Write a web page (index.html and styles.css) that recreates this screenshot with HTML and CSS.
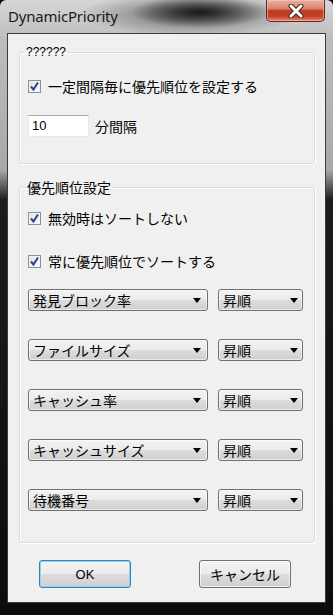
FILE: index.html
```html
<!DOCTYPE html>
<html lang="ja">
<head>
  <meta charset="UTF-8" />
  <title>DynamicPriority</title>
  <link rel="stylesheet" href="styles.css">
</head>
<body>
  <div class="window">
    <!-- タイトルバー -->
    <div class="titlebar">
      <div class="title">DynamicPriority</div>
      <div class="close">
        <svg width="18" height="14" viewBox="0 0 18 14">
          <path d="M4 2 L14 12 M14 2 L4 12" stroke="#4a2018" stroke-width="5" stroke-linecap="round" fill="none"/>
          <path d="M4 2 L14 12 M14 2 L4 12" stroke="#ffffff" stroke-width="3" stroke-linecap="round" fill="none"/>
        </svg>
      </div>
    </div>

    <div class="client">
      <fieldset class="group group-interval">
        <legend class="legend-small">??????</legend>
        <label class="check">
          <span class="box"><svg width="11" height="11" viewBox="0 0 11 11"><path d="M2 5.5 L4.5 8.5 L9 1.5" stroke="#2b4490" stroke-width="2" fill="none"/></svg></span>
          一定間隔毎に優先順位を設定する
        </label>
        <div class="interval-row">
          <div class="textbox">10</div>
          <span>分間隔</span>
        </div>
      </fieldset>

      <fieldset class="group group-sort">
        <legend>優先順位設定</legend>
        <label class="check">
          <span class="box"><svg width="11" height="11" viewBox="0 0 11 11"><path d="M2 5.5 L4.5 8.5 L9 1.5" stroke="#2b4490" stroke-width="2" fill="none"/></svg></span>
          無効時はソートしない
        </label>
        <label class="check check-second">
          <span class="box"><svg width="11" height="11" viewBox="0 0 11 11"><path d="M2 5.5 L4.5 8.5 L9 1.5" stroke="#2b4490" stroke-width="2" fill="none"/></svg></span>
          常に優先順位でソートする
        </label>

        <div class="sort-list">
          <div class="sort-row">
            <div class="combo combo-key"><span>発見ブロック率</span><i class="arrow"></i></div>
            <div class="combo combo-order"><span>昇順</span><i class="arrow"></i></div>
          </div>
          <div class="sort-row">
            <div class="combo combo-key"><span>ファイルサイズ</span><i class="arrow"></i></div>
            <div class="combo combo-order"><span>昇順</span><i class="arrow"></i></div>
          </div>
          <div class="sort-row">
            <div class="combo combo-key"><span>キャッシュ率</span><i class="arrow"></i></div>
            <div class="combo combo-order"><span>昇順</span><i class="arrow"></i></div>
          </div>
          <div class="sort-row">
            <div class="combo combo-key"><span>キャッシュサイズ</span><i class="arrow"></i></div>
            <div class="combo combo-order"><span>昇順</span><i class="arrow"></i></div>
          </div>
          <div class="sort-row">
            <div class="combo combo-key"><span>待機番号</span><i class="arrow"></i></div>
            <div class="combo combo-order"><span>昇順</span><i class="arrow"></i></div>
          </div>
        </div>
      </fieldset>

      <div class="buttons">
        <div class="btn btn-default">OK</div>
        <div class="btn">キャンセル</div>
      </div>
    </div>
  </div>
</body>
</html>
```

FILE: styles.css
```css
html, body {
  margin: 0;
  padding: 0;
  background: #000;
}

.window {
  width: 333px;
  height: 615px;
  box-sizing: border-box;
  display: flex;
  flex-direction: column;
  border-radius: 6px 6px 0 0;
  background:
    radial-gradient(ellipse 70px 16px at 200px 12px, rgba(20, 20, 20, 0.95), rgba(40, 40, 40, 0) 100%),
    radial-gradient(ellipse 110px 22px at 190px 14px, rgba(60, 60, 60, 0.7), rgba(60, 60, 60, 0) 100%),
    linear-gradient(to bottom, #d6d6d6 0, #bdbdbd 40px, #a8a8a8 170px, #1c1c1c 200px, #0c0c0c 100%);
  font-family: "Noto Sans CJK JP", "Noto Sans", sans-serif;
  color: #000;
}

/* タイトルバー */
.titlebar {
  height: 33px;
  display: flex;
  justify-content: space-between;
  align-items: flex-start;
  padding: 0 8px 0 8px;
  flex-shrink: 0;
}

.title {
  font-family: "Noto Sans", "Open Sans", sans-serif;
  font-size: 15px;
  line-height: 32px;
  color: #1a1a1a;
  letter-spacing: -0.2px;
}

.close {
  width: 59px;
  height: 22px;
  box-sizing: border-box;
  border: 1px solid #5b2b22;
  border-top: none;
  border-radius: 0 0 5px 5px;
  background: linear-gradient(to bottom, #e9b0a2 0, #d98572 40%, #c2391f 52%, #c5402a 78%, #e58a6f 100%);
  display: flex;
  align-items: center;
  justify-content: center;
  box-shadow: inset 0 0 0 1px rgba(255, 210, 200, 0.5);
}

.client {
  flex: 1;
  margin: 0 7px 12px 7px;
  border: 1px solid #3b3b3b;
  background: #f0f0f0;
  padding: 11px 10px 0 11px;
}

/* グループボックス */
.group {
  margin: 0;
  min-width: 0;
  border: 1px solid #d5dfe5;
  border-radius: 3px;
  box-shadow: inset 1px 1px 0 #fff, 1px 1px 0 #fff;
  padding: 17px 0 26px 8px;
}

.group legend {
  padding: 0 1px;
  margin-left: -2px;
  font-size: 14px;
  line-height: 18px;
}

.group legend.legend-small {
  font-family: "Liberation Sans", sans-serif;
  font-size: 12px;
  line-height: 14px;
  margin-left: -3px;
}

.group-sort {
  margin-top: 14px;
  padding: 12px 0 31px 8px;
}

.check {
  display: flex;
  align-items: center;
  height: 20px;
  font-size: 14px;
  gap: 7px;
}

.check-second {
  margin-top: 23px;
}

.box {
  width: 13px;
  height: 13px;
  box-sizing: border-box;
  border: 1px solid #8e8f8f;
  background: linear-gradient(135deg, #dcdcdc 0, #f4f4f4 60%, #fcfcfc 100%);
  box-shadow: inset 0 0 0 1px #f4f4f4;
  display: flex;
  align-items: center;
  justify-content: center;
}

.interval-row {
  margin-top: 19px;
  display: flex;
  align-items: center;
  gap: 6px;
  font-size: 14px;
}

.textbox {
  width: 61px;
  height: 22px;
  box-sizing: border-box;
  background: #fff;
  border: 1px solid #e3e9ef;
  border-top-color: #abadb3;
  font-family: "Liberation Sans", sans-serif;
  font-size: 13px;
  line-height: 20px;
  padding-left: 3px;
}

/* ソート設定 */
.sort-list {
  margin-top: 18px;
  display: flex;
  flex-direction: column;
  gap: 28px;
}

.sort-row {
  display: flex;
  gap: 10px;
}

.combo {
  height: 22px;
  box-sizing: border-box;
  border: 1px solid #707070;
  border-radius: 3px;
  background: linear-gradient(to bottom, #f2f2f2 0, #ebebeb 50%, #dddddd 51%, #cfcfcf 100%);
  box-shadow: inset 0 0 0 1px rgba(255, 255, 255, 0.6);
  display: flex;
  align-items: center;
  justify-content: space-between;
  padding: 0 6px 0 4px;
  font-size: 14px;
  line-height: 20px;
}

.combo-key {
  width: 180px;
}

.combo-order {
  width: 85px;
  padding-right: 4px;
}

.arrow {
  width: 0;
  height: 0;
  border-left: 4px solid transparent;
  border-right: 4px solid transparent;
  border-top: 5px solid #000;
}

/* ボタン */
.buttons {
  display: flex;
  gap: 68px;
  margin-top: 17px;
  padding-left: 20px;
}

.btn {
  width: 92px;
  height: 28px;
  box-sizing: border-box;
  border: 1px solid #707070;
  border-radius: 3px;
  background: linear-gradient(to bottom, #f2f2f2 0, #ebebeb 50%, #dddddd 51%, #cfcfcf 100%);
  box-shadow: inset 0 0 0 1px rgba(255, 255, 255, 0.7);
  display: flex;
  align-items: center;
  justify-content: center;
  font-size: 14px;
}

.btn-default {
  border-color: #3c7fb1;
  box-shadow: inset 0 0 0 1px #8ed3f5;
  font-family: "Liberation Sans", sans-serif;
  font-size: 13px;
}
```
